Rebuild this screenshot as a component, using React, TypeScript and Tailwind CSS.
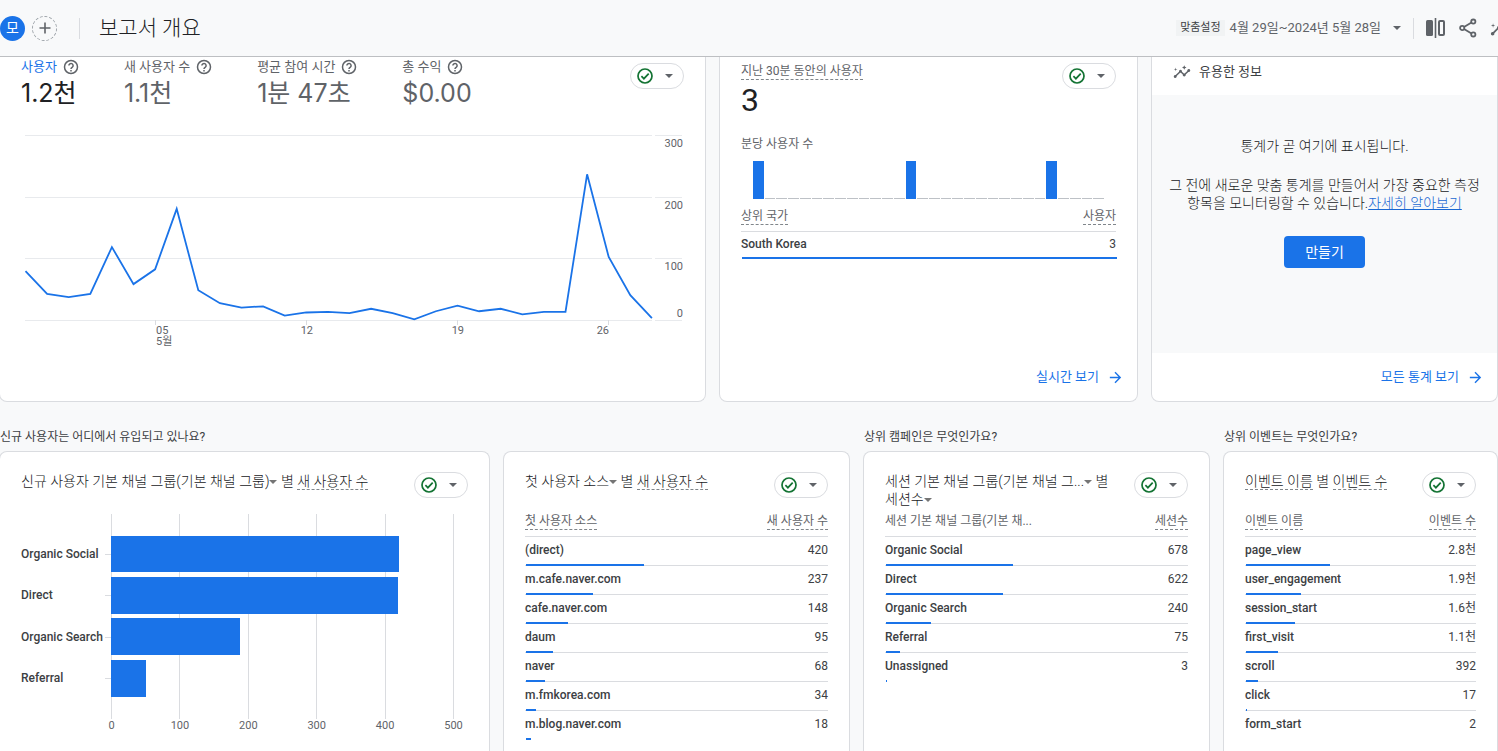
import type { ReactNode } from "react"
import { MdArrowForward, MdInsights } from "react-icons/md"

interface Row {
  name: string
  value: string
  share: number
}

const metrics = [
  { label: "사용자", value: "1.2천", active: true },
  { label: "새 사용자 수", value: "1.1천" },
  { label: "평균 참여 시간", value: "1분 47초" },
  { label: "총 수익", value: "$0.00" },
]

const daily = [
  80, 43, 38, 43, 119, 59, 83, 181, 49, 28, 21, 23, 8, 13, 14, 12, 19, 12, 2,
  15, 24, 15, 19, 10, 14, 14, 237, 103, 41, 4,
]

const minutes = Array.from({ length: 30 }, (_, i) => [0, 13, 25].includes(i))

const channels = [
  { name: "Organic Social", value: 421 },
  { name: "Direct", value: 420 },
  { name: "Organic Search", value: 189 },
  { name: "Referral", value: 51 },
]

const countries: Row[] = [{ name: "South Korea", value: "3", share: 100 }]

const sources: Row[] = [
  { name: "(direct)", value: "420", share: 39 },
  { name: "m.cafe.naver.com", value: "237", share: 22 },
  { name: "cafe.naver.com", value: "148", share: 14 },
  { name: "daum", value: "95", share: 9 },
  { name: "naver", value: "68", share: 6.4 },
  { name: "m.fmkorea.com", value: "34", share: 3.3 },
  { name: "m.blog.naver.com", value: "18", share: 1.7 },
]

const sessions: Row[] = [
  { name: "Organic Social", value: "678", share: 42 },
  { name: "Direct", value: "622", share: 38.5 },
  { name: "Organic Search", value: "240", share: 15 },
  { name: "Referral", value: "75", share: 4.7 },
  { name: "Unassigned", value: "3", share: 0.4 },
]

const events: Row[] = [
  { name: "page_view", value: "2.8천", share: 36.5 },
  { name: "user_engagement", value: "1.9천", share: 24 },
  { name: "session_start", value: "1.6천", share: 21 },
  { name: "first_visit", value: "1.1천", share: 14 },
  { name: "scroll", value: "392", share: 5.2 },
  { name: "click", value: "17", share: 0.4 },
  { name: "form_start", value: "2", share: 0 },
]

const Caret = () => (
  <svg
    viewBox="0 0 8 4"
    className="inline-block h-1 w-2 align-middle"
    fill="#5f6368"
    aria-hidden="true"
  >
    <path d="M0 0h8L4 4z" />
  </svg>
)

const HelpIcon = () => (
  <svg viewBox="0 0 16 16" className="h-4 w-4" fill="none" stroke="#5f6368">
    <circle cx="8" cy="8" r="6.500" strokeWidth="1.500" />
    <path
      d="M5.900 6.600a2.100 2.100 0 1 1 3.400 1.600c-.8.600-1.300.9-1.300 1.800"
      strokeWidth="1.500"
    />
    <path d="M8 10.900v1.500" strokeWidth="1.500" />
  </svg>
)

const ShareIcon = () => (
  <svg
    viewBox="0 0 18 20"
    className="h-5 w-[18px]"
    fill="none"
    stroke="#5f6368"
    strokeWidth="1.800"
  >
    <path d="M5 9l7.500-4.500M5 11l7.500 4.500" />
    <circle cx="3.200" cy="10" r="2.100" />
    <circle cx="14.300" cy="3.600" r="2.100" />
    <circle cx="14.300" cy="16.400" r="2.100" />
  </svg>
)

const StatusButton = () => (
  <button
    type="button"
    aria-label="데이터 품질"
    className="flex h-[26px] w-[54px] shrink-0 items-center justify-between rounded-full border border-[#dadce0] bg-white pr-[10px] pl-[6px]"
  >
    <svg viewBox="0 0 16 16" className="h-4 w-4" fill="none" stroke="#137333">
      <circle cx="8" cy="8" r="7" strokeWidth="1.7" />
      <path d="M4.4 8.200l2.500 2.500 4.800-5" strokeWidth="1.700" />
    </svg>
    <Caret />
  </button>
)

const Dashed = ({ children }: { children: ReactNode }) => (
  <span className="inline-block border-b border-dashed border-[#80868b] leading-4">
    {children}
  </span>
)

const Picker = ({ children }: { children: ReactNode }) => (
  <button type="button" className="text-[#202124]">
    {children}
    <svg
      viewBox="0 0 8 4"
      className="inline-block h-1 w-2 align-middle"
      fill="#757575"
      aria-hidden="true"
    >
      <path d="M0 0h8L4 4z" />
    </svg>
  </button>
)

interface TableProps {
  name: ReactNode
  value: string
  rows: Row[]
  rowClass?: string
}

const DataTable = ({ name, value, rows, rowClass = "h-[29px]" }: TableProps) => (
  <table className="w-full text-xs">
    <thead>
      <tr className="h-[28px] text-[#5f6368]">
        <th className="pt-[5px] text-left align-top leading-4 font-normal">
          {name}
        </th>
        <th className="pt-[5px] text-right align-top leading-4 font-normal">
          <Dashed>{value}</Dashed>
        </th>
      </tr>
    </thead>
    <tbody>
      {rows.map((row) => (
        <tr
          key={row.name}
          className={`${rowClass} relative border-t border-[#dadce0] text-[#3c4043]`}
        >
          <td className="pb-px leading-4 font-medium">
            {row.name}
            <span
              className="absolute bottom-[-1px] left-px h-[2px] bg-[#1a73e8]"
              style={{ width: `${row.share}%` }}
            />
          </td>
          <td className="pb-px text-right leading-4">{row.value}</td>
        </tr>
      ))}
    </tbody>
  </table>
)

const LineChart = () => {
  const y = (v: number) => 200.5 - v * 0.6167
  const points = daily.map((v, i) => `${25.5 + i * 21.6},${y(v)}`).join(" ")
  return (
    <svg viewBox="0 0 705 240" className="mt-[11px] w-full text-[11px]">
      {[300, 200, 100, 0].map((v) => (
        <g key={v}>
          <path
            d={`M25 ${Math.floor(y(v)) + 0.5}H652M655 ${Math.floor(y(v)) + 0.5}H682`}
            stroke="#e8eaed"
          />
          <text
            x="683"
            y={v === 0 ? 197 : Math.floor(y(v)) + 12}
            textAnchor="end"
            fill="#5f6368"
          >
            {v}
          </text>
        </g>
      ))}
      <path d="M155.500 200v5M306.500 200v5M457.500 200v5M608.500 200v5" stroke="#dadce0" />
      <polyline points={points} fill="none" stroke="#1a73e8" strokeWidth="1.8" />
      <g fill="#5f6368">
        <text x="156" y="214">05</text>
        <text x="156" y="225">5월</text>
        <text x="313" y="214" textAnchor="end">12</text>
        <text x="464" y="214" textAnchor="end">19</text>
        <text x="609" y="214" textAnchor="end">26</text>
      </g>
    </svg>
  )
}

const BarChart = () => (
  <svg viewBox="0 0 489 232" className="w-full">
    {[0, 100, 200, 300, 400, 500].map((v) => (
      <g key={v}>
        <path
          d={`M${Math.round(111 + v * 0.684) + 0.5} 6V211`}
          stroke="#dadce0"
        />
        <text
          x={111.5 + v * 0.684}
          y="221"
          textAnchor="middle"
          fill="#5f6368"
          className="text-[11px]"
        >
          {v}
        </text>
      </g>
    ))}
    {channels.map((c, i) => (
      <g key={c.name}>
        <text
          x="21"
          y={50 + Math.round(i * 41.4)}
          fill="#3c4043"
          className="text-xs font-medium"
        >
          {c.name}
        </text>
        <path d={`M105 ${46.5 + Math.round(i * 41.4)}h6`} stroke="#dadce0" />
        <rect
          x="111"
          y={28 + Math.floor(i * 41.4)}
          width={Math.round(c.value * 0.684)}
          height={i === 0 ? 36 : 37}
          fill="#1a73e8"
        />
      </g>
    ))}
  </svg>
)

const Header = () => (
  <header className="flex h-[57px] items-center justify-between overflow-hidden border-b border-[#bdbfc2] bg-[#f8f9fa]">
    <div className="flex items-center">
      <button
        type="button"
        className="flex h-[25px] w-[25px] items-center justify-center rounded-full bg-[#1a73e8] text-sm leading-none text-white"
      >
        모
      </button>
      <button
        type="button"
        aria-label="비교 추가"
        className="ml-[7px] flex h-[25px] w-[25px] items-center justify-center rounded-full border border-dashed border-[#9aa0a6]"
      >
        <svg viewBox="0 0 12 12" className="h-3 w-3" stroke="#5f6368" strokeWidth="1.6">
          <path d="M6 .5v11M.5 6h11" />
        </svg>
      </button>
      <span className="ml-[22px] h-[21px] w-px bg-[#dadce0]" />
      <h1 className="ml-[19px] text-[21px] leading-7 font-light text-[#202124]">
        보고서 개요
      </h1>
    </div>
    <div className="-mr-[13px] flex items-center text-[#5f6368]">
      <button type="button" className="flex items-center text-[13px]">
        <span className="mr-[5px] bg-[#f1f3f4] px-1 text-[11px] leading-4 text-[#3c4043]">
          맞춤설정
        </span>
        <span className="mr-3">4월 29일~2024년 5월 28일</span>
        <Caret />
      </button>
      <span className="mx-3 h-[21px] w-px bg-[#dadce0]" />
      <button type="button" aria-label="비교">
        <svg viewBox="0 0 19 20" className="h-5 w-[19px]" fill="none">
          <rect y="2" width="7" height="16" rx="1.500" fill="#5f6368" />
          <path d="M9.500 0v20" stroke="#5f6368" strokeWidth="1.600" />
          <rect x="13" y="3" width="5" height="14" rx="1" stroke="#5f6368" strokeWidth="2" />
        </svg>
      </button>
      <button type="button" aria-label="공유" className="mr-[13px] ml-[14px]">
        <ShareIcon />
      </button>
      <button type="button" aria-label="통계">
        <MdInsights size={21} />
      </button>
    </div>
  </header>
)

interface ReportProps {
  heading?: string
  title: ReactNode
  children: ReactNode
}

const Report = ({ heading, title, children }: ReportProps) => (
  <section className="flex min-w-0 flex-col">
    <h2 className="h-[49px] pt-[26px] pl-px text-xs leading-[18px] text-[#3c4043]">
      {heading}
    </h2>
    <div className="flex-1 rounded-t-lg border border-b-0 border-[#dadce0] bg-white pt-5">
      <div className="flex min-h-9 items-start justify-between gap-4 px-[21px]">
        <h3 className="text-sm leading-[18px] font-light break-keep text-[#202124]">
          {title}
        </h3>
        <StatusButton />
      </div>
      {children}
    </div>
  </section>
)

const App = () => {
  return (
    <div className="flex min-h-screen flex-col overflow-hidden bg-[#f8f9fa] font-[Roboto,'Noto_Sans_CJK_KR',sans-serif] text-[#202124]">
      <Header />
      <main className="-ml-px flex flex-1 flex-col">
        <div className="grid min-h-[345px] grid-cols-[707fr_419fr_347fr] gap-x-[13px]">
          <section className="rounded-b-lg border border-t-0 border-[#dadce0] bg-white">
            <div className="flex items-start justify-between px-[21px]">
              <div className="flex gap-[45px]">
                {metrics.map((m) => (
                  <div key={m.label}>
                    <div className="flex h-5 items-center gap-1.5 text-[13px] text-[#5f6368]">
                      <span className={m.active ? "text-[#1a73e8]" : ""}>
                        {m.label}
                      </span>
                      <HelpIcon />
                    </div>
                    <p
                      className={`font-[Inter,'Noto_Sans_CJK_KR',sans-serif] text-[25px] leading-8 ${m.active ? "text-[#202124]" : "text-[#5f6368]"}`}
                    >
                      {m.value}
                    </p>
                  </div>
                ))}
              </div>
              <div className="pt-[6px]">
                <StatusButton />
              </div>
            </div>
            <LineChart />
          </section>

          <section className="flex flex-col rounded-b-lg border border-t-0 border-[#dadce0] bg-white px-[21px] pt-[6px]">
            <div className="flex items-start justify-between">
              <div className="text-xs text-[#5f6368]">
                <Dashed>지난 30분 동안의 사용자</Dashed>
                <p className="text-[32px] leading-10 text-[#202124]">3</p>
              </div>
              <StatusButton />
            </div>
            <p className="mt-[15px] text-xs leading-[18px] text-[#5f6368]">
              분당 사용자 수
            </p>
            <div className="mt-2 mr-3 ml-3 flex h-[38px] items-end gap-px">
              {minutes.map((on, i) => (
                <span
                  key={i}
                  className={`flex-1 ${on ? "h-full bg-[#1a73e8]" : "h-px bg-[#bdc1c6]"}`}
                />
              ))}
            </div>
            <div className="mt-1">
              <DataTable
                name={<Dashed>상위 국가</Dashed>}
                value="사용자"
                rows={countries}
                rowClass="h-[27px]"
              />
            </div>
            <a
              href="#"
              className="-mr-2 mt-auto flex h-12 items-center justify-end gap-2 text-[13px] text-[#1a73e8]"
            >
              실시간 보기
              <MdArrowForward size={17} />
            </a>
          </section>

          <section className="flex flex-col rounded-b-lg border border-t-0 border-[#dadce0] bg-white">
            <div className="flex h-[38px] items-center gap-2 px-[21px] pb-[9px] text-[13px] text-[#3c4043]">
              <MdInsights size={18} color="#5f6368" />
              유용한 정보
            </div>
            <div className="flex flex-1 flex-col items-center bg-[#f8f9fa] px-4 pt-[42px] text-center text-sm leading-[18px] font-light break-keep">
              <p>통계가 곧 여기에 표시됩니다.</p>
              <p className="mt-[21px]">
                그 전에 새로운 맞춤 통계를 만들어서 가장 중요한 측정 항목을
                모니터링할 수 있습니다.
                <a href="#" className="text-[#1967d2] underline">
                  자세히 알아보기
                </a>
              </p>
              <button
                type="button"
                className="mt-6 h-8 rounded bg-[#1a73e8] px-[21px] font-normal text-white"
              >
                만들기
              </button>
            </div>
            <a
              href="#"
              className="flex h-12 items-center justify-end gap-2 pr-[13px] text-[13px] text-[#1a73e8]"
            >
              모든 통계 보기
              <MdArrowForward size={17} />
            </a>
          </section>
        </div>

        <div className="grid flex-1 grid-cols-[491fr_347fr_347fr_275fr] gap-x-[13px]">
          <Report
            heading="신규 사용자는 어디에서 유입되고 있나요?"
            title={
              <>
                <Picker>신규 사용자 기본 채널 그룹(기본 채널 그룹)</Picker> 별{" "}
                <Dashed>새 사용자 수</Dashed>
              </>
            }
          >
            <BarChart />
          </Report>
          <Report
            title={
              <>
                <Picker>첫 사용자 소스</Picker> 별 <Dashed>새 사용자 수</Dashed>
              </>
            }
          >
            <div className="px-[21px]">
              <DataTable
                name={<Dashed>첫 사용자 소스</Dashed>}
                value="새 사용자 수"
                rows={sources}
              />
            </div>
          </Report>
          <Report
            heading="상위 캠페인은 무엇인가요?"
            title={
              <>
                <Picker>세션 기본 채널 그룹(기본 채널 그...</Picker> 별{" "}
                <Picker>세션수</Picker>
              </>
            }
          >
            <div className="px-[21px]">
              <DataTable
                name="세션 기본 채널 그룹(기본 채..."
                value="세션수"
                rows={sessions}
              />
            </div>
          </Report>
          <Report
            heading="상위 이벤트는 무엇인가요?"
            title={
              <>
                <Dashed>이벤트 이름</Dashed> 별 <Dashed>이벤트 수</Dashed>
              </>
            }
          >
            <div className="px-[21px]">
              <DataTable
                name={<Dashed>이벤트 이름</Dashed>}
                value="이벤트 수"
                rows={events}
              />
            </div>
          </Report>
        </div>
      </main>
    </div>
  )
}

export default App
